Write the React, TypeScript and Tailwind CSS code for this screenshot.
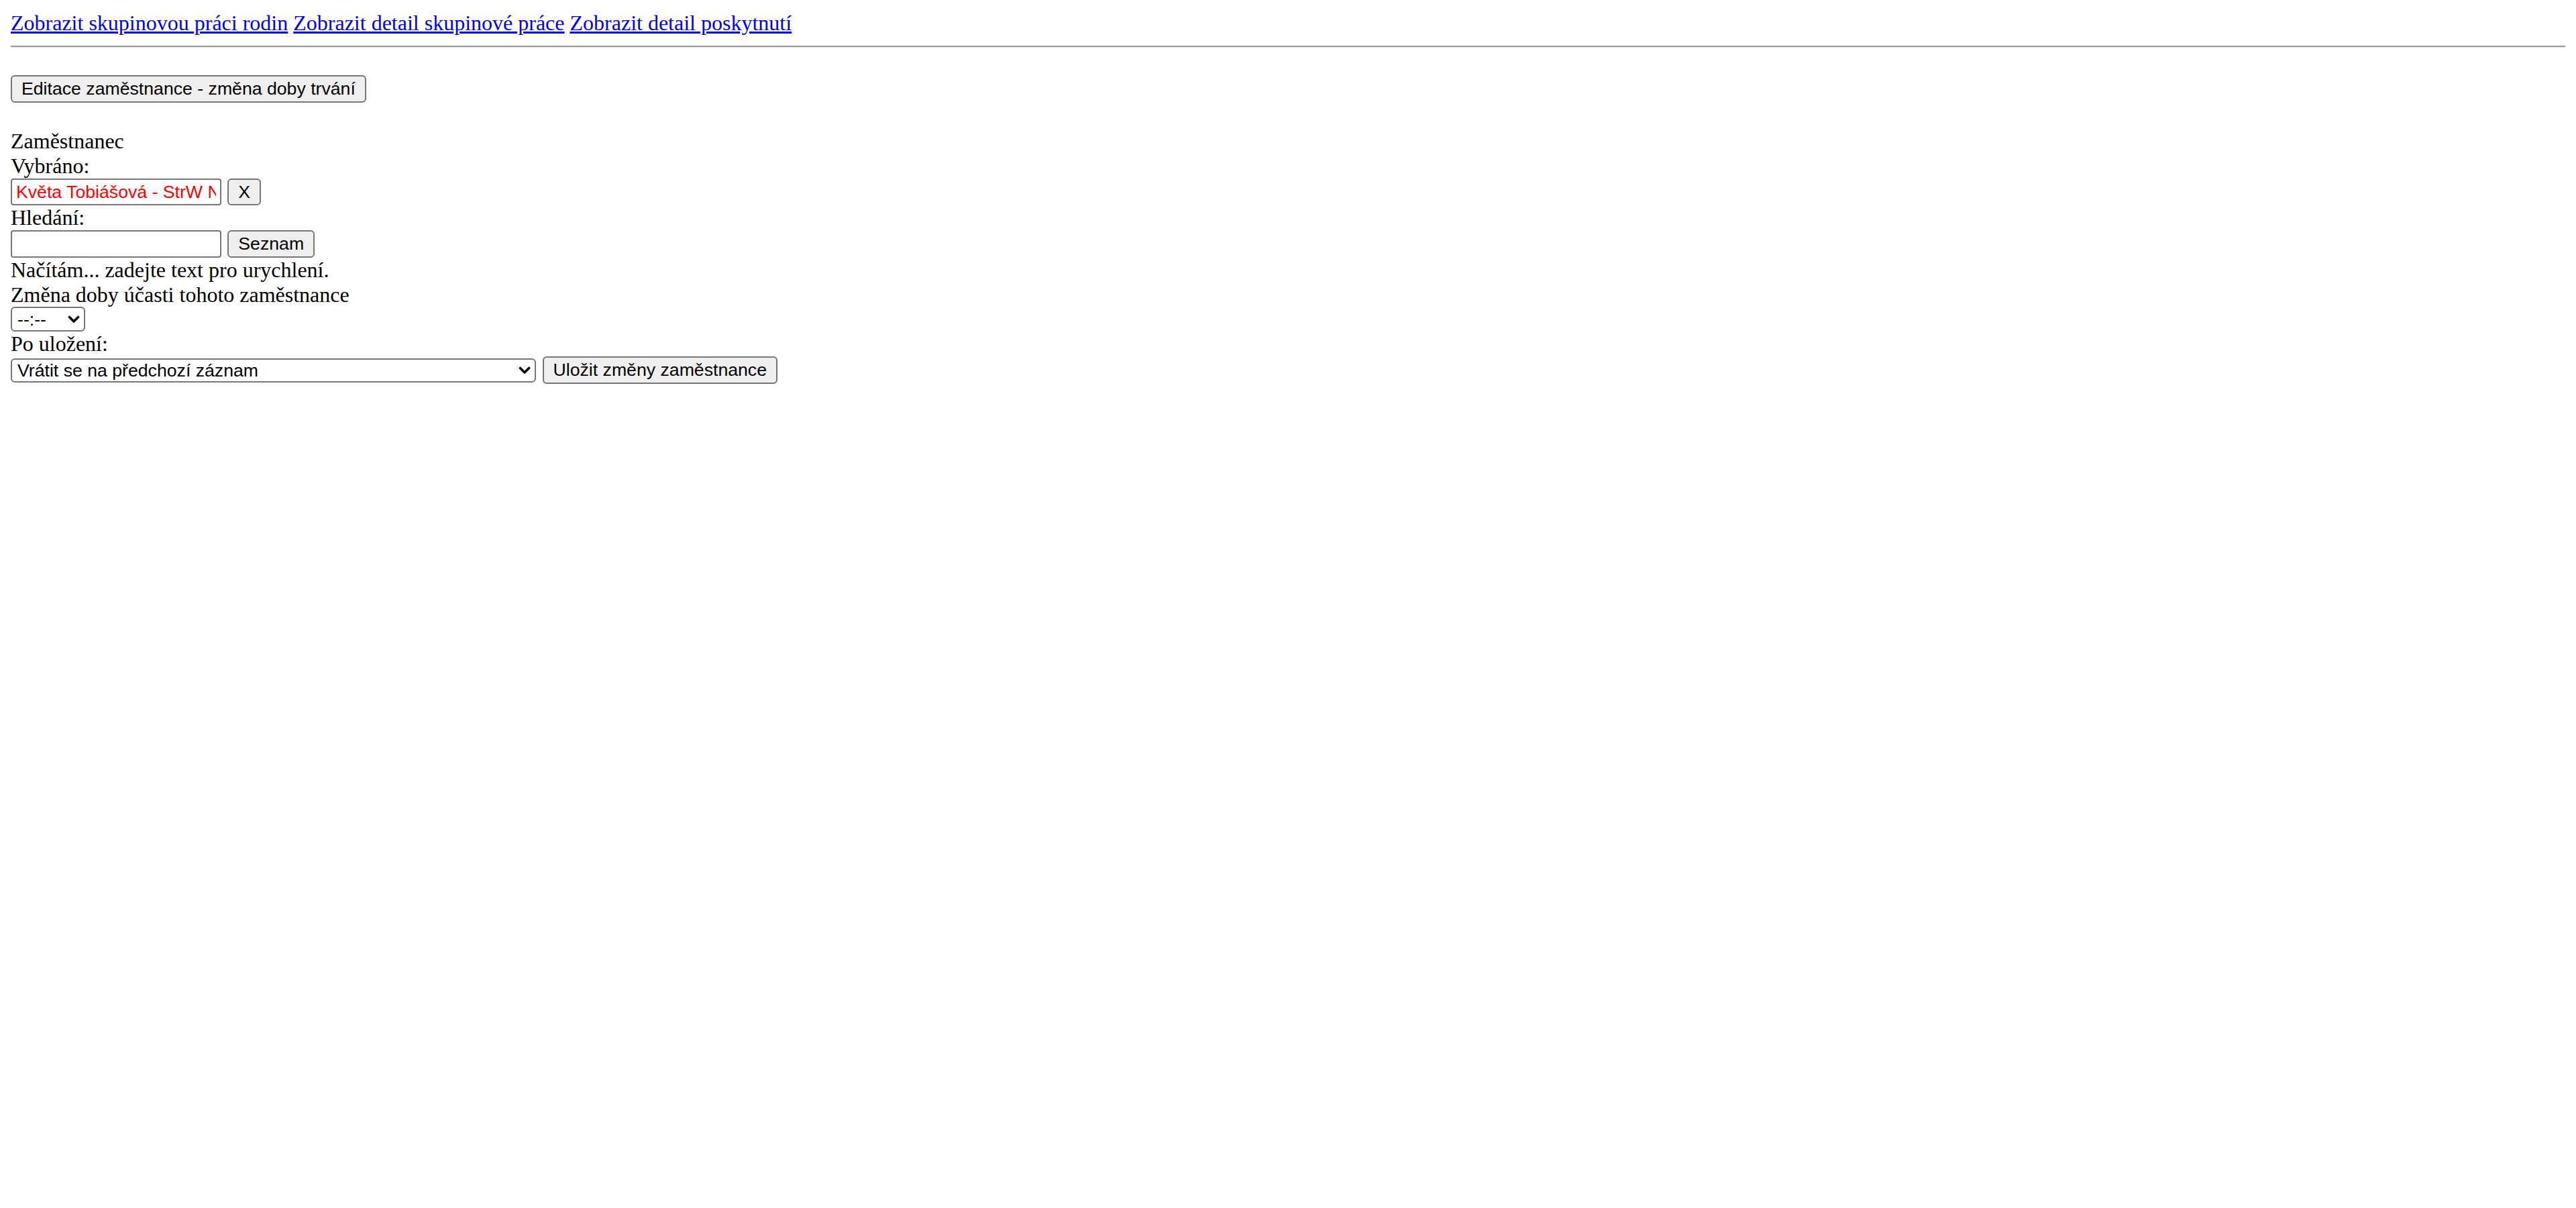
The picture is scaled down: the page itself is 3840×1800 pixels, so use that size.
import React from "react";

function Chevron() {
  return (
    <svg width="18" height="12" viewBox="0 0 18 12" className="pointer-events-none absolute right-[8px] top-1/2 -translate-y-1/2">
      <path d="M2.5 2.5 L9 9 L15.5 2.5" fill="none" stroke="#000" strokeWidth="3.6" strokeLinecap="round" strokeLinejoin="round" />
    </svg>
  );
}

const btn =
  "h-[40.6px] border-2 border-[#767676] rounded-[6px] bg-[#efefef] px-[14px] text-[26.67px] leading-[30.67px] text-black font-['Liberation_Sans',Arial,sans-serif] whitespace-nowrap";

const inputCls =
  "h-[40.6px] w-[314px] rounded-[4px] border-2 border-[#767676] bg-white px-[6px] text-[26.67px] leading-[30.67px] font-['Liberation_Sans',Arial,sans-serif] outline-none";

const selectCls =
  "appearance-none rounded-[6px] border-2 border-[#767676] bg-white pl-[8px] text-[26.67px] leading-[30px] text-black font-['Liberation_Sans',Arial,sans-serif] outline-none";

export default function App() {
  return (
    <div className="min-h-[1800px] bg-white p-[16px] font-['Liberation_Serif','Times_New_Roman',serif] text-[32px] leading-[36.8px] text-black">
      <div className="h-[36.8px]">
        <a href="#" className="text-[#0000ee] underline">Zobrazit skupinovou práci rodin</a>{" "}
        <a href="#" className="text-[#0000ee] underline">Zobrazit detail skupinové práce</a>{" "}
        <a href="#" className="text-[#0000ee] underline">Zobrazit detail poskytnutí</a>
      </div>
      <hr className="mt-[15.5px] mb-[40px] h-0 border-0 border-t-2 border-b-2 border-t-[#9a9a9a] border-b-[#eeeeee]" />
      <div className="flex">
        <button type="button" className={btn}>Editace zaměstnance - změna doby trvání</button>
      </div>
      <div className="mt-[39.4px]">
        <div>Zaměstnanec</div>
        <div>Vybráno:</div>
        <div className="flex h-[40.6px] items-center gap-[9.3px]">
          <input readOnly value="Květa Tobiášová - StrW Nový Jičín" className={`${inputCls} text-[#ff0000]`} />
          <button type="button" className={btn}>X</button>
        </div>
        <div>Hledání:</div>
        <div className="flex h-[40.6px] items-center gap-[9.3px]">
          <input className={`${inputCls} text-black`} />
          <button type="button" className={btn}>Seznam</button>
        </div>
        <div>Načítám... zadejte text pro urychlení.</div>
        <div>Změna doby účasti tohoto zaměstnance</div>
        <div className="flex h-[37px] items-center">
          <div className="relative flex">
            <select className={`${selectCls} h-[37px] w-[111px]`}>
              <option>--:--</option>
            </select>
            <Chevron />
          </div>
        </div>
        <div>Po uložení:</div>
        <div className="flex h-[40.6px] items-center gap-[9.5px]">
          <div className="relative flex">
            <select className={`${selectCls} h-[36px] w-[783px]`}>
              <option>Vrátit se na předchozí záznam</option>
            </select>
            <Chevron />
          </div>
          <button type="button" className={btn}>Uložit změny zaměstnance</button>
        </div>
      </div>
    </div>
  );
}
